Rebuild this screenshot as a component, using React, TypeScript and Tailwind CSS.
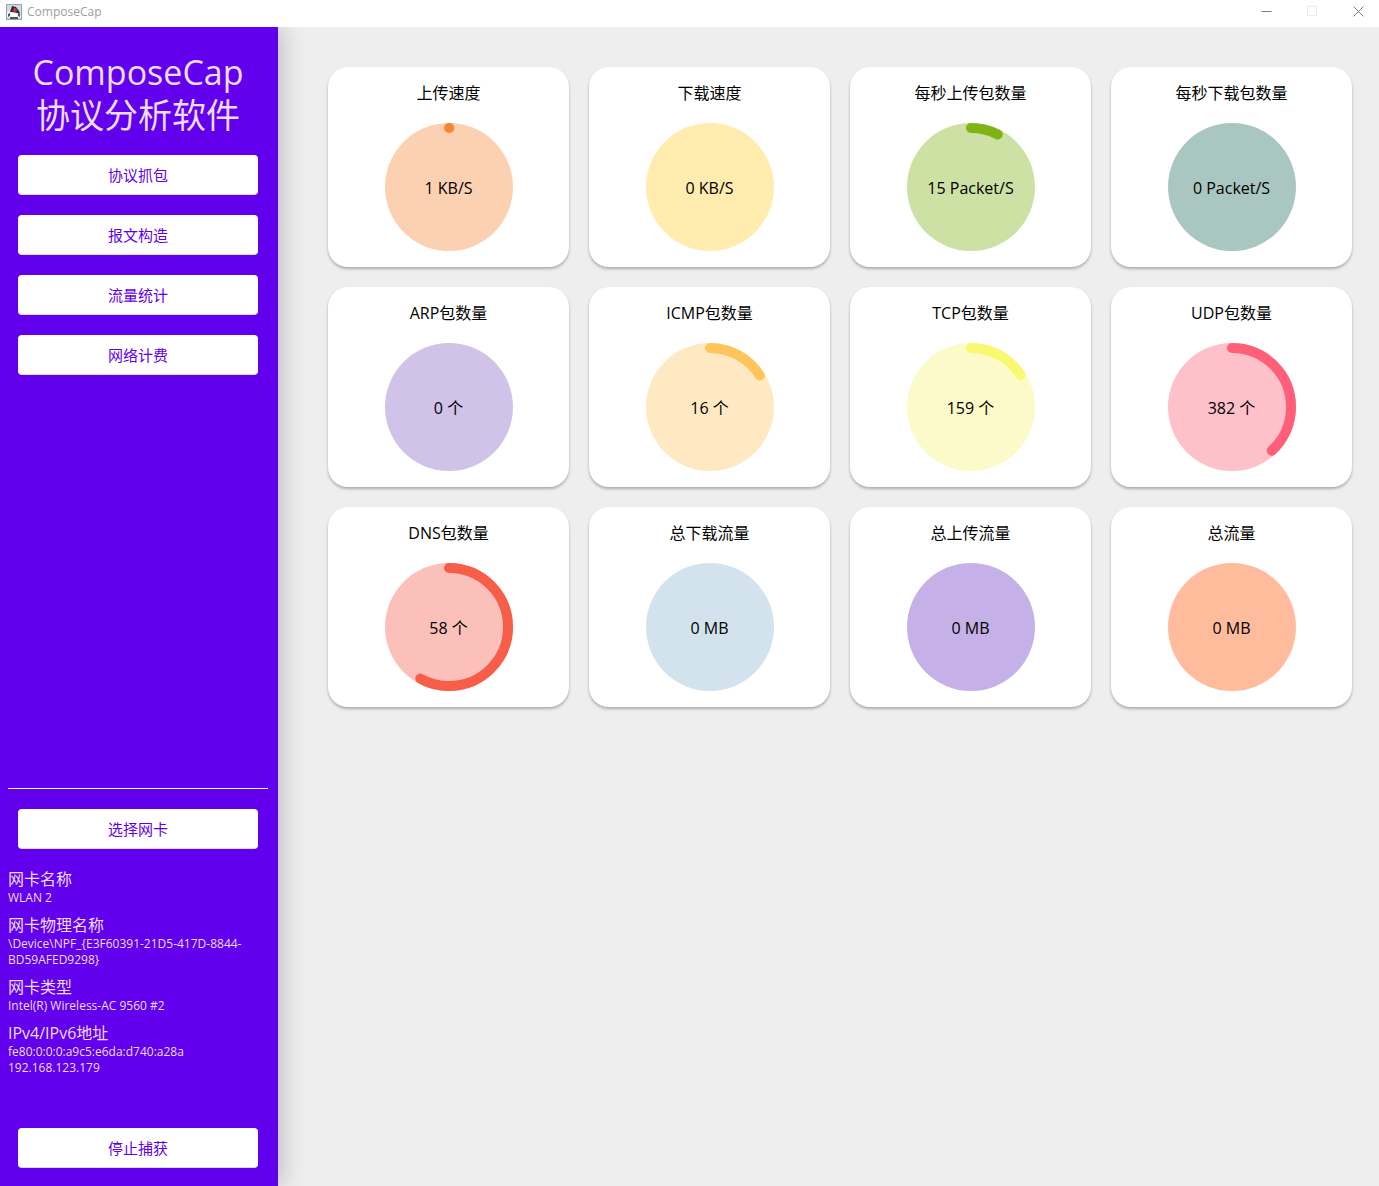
import React from "react";

type Metric = {
  title: string;
  value: string;
  progress: number;
  track: string;
  bar: string;
};

const metrics: Metric[] = [
  { title: "上传速度", value: "1 KB/S", progress: 0.001, track: "#fbd1b1", bar: "#f68735" },
  { title: "下载速度", value: "0 KB/S", progress: 0, track: "#ffecae", bar: "#ffc928" },
  { title: "每秒上传包数量", value: "15 Packet/S", progress: 0.075, track: "#cee1a4", bar: "#80b415" },
  { title: "每秒下载包数量", value: "0 Packet/S", progress: 0, track: "#aac6c1", bar: "#2d7368" },
  { title: "ARP包数量", value: "0 个", progress: 0, track: "#d0c2e8", bar: "#8562c4" },
  { title: "ICMP包数量", value: "16 个", progress: 0.16, track: "#fee9c3", bar: "#ffc55a" },
  { title: "TCP包数量", value: "159 个", progress: 0.159, track: "#fdfac9", bar: "#f9f871" },
  { title: "UDP包数量", value: "382 个", progress: 0.382, track: "#fec0c9", bar: "#ff5f79" },
  { title: "DNS包数量", value: "58 个", progress: 0.58, track: "#fbc0b9", bar: "#f65e49" },
  { title: "总下载流量", value: "0 MB", progress: 0, track: "#d3e3ee", bar: "#8ebad4" },
  { title: "总上传流量", value: "0 MB", progress: 0, track: "#c5b1e7", bar: "#6e3cc4" },
  { title: "总流量", value: "0 MB", progress: 0, track: "#ffbc9d", bar: "#ff6d2a" },
];

const menu = ["协议抓包", "报文构造", "流量统计", "网络计费"];

const adapter = [
  { label: "网卡名称", lines: ["WLAN 2"] },
  { label: "网卡物理名称", lines: ["\\Device\\NPF_{E3F60391-21D5-417D-8844-BD59AFED9298}"] },
  { label: "网卡类型", lines: ["Intel(R) Wireless-AC 9560 #2"] },
  { label: "IPv4/IPv6地址", lines: ["fe80:0:0:0:a9c5:e6da:d740:a28a", "192.168.123.179"] },
];

function AppIcon() {
  return (
    <svg width="16" height="16" viewBox="0 0 16 16" aria-hidden="true">
      <rect width="16" height="16" fill="#8fa5b8" />
      <rect x="1" y="1" width="14" height="14" fill="#cfdae4" />
      <path d="M1 8 L4 7 L6 9 L10 8 L14 9 L15 13 L12 14 L3 14 L1 12 Z" fill="#f7f7f7" />
      <path d="M6 2 L10 3 L13 7 L14 10 L11 9 L7 8 L4 8 L5 5 Z" fill="#2c2c33" />
      <path d="M2 10 L4 9 L4 12 L2 13 Z M12 9 L14 10 L14 13 L12 12 Z M4 13 H12 V15 H4 Z" fill="#55555e" />
      <path d="M6 10 H10 V13 H6 Z" fill="#ffffff" />
      <circle cx="9" cy="6" r="2" fill="#dc2f2a" />
    </svg>
  );
}

function PanelButton({ children }: { children: React.ReactNode }) {
  return (
    <button
      type="button"
      className="mx-[10px] h-10 rounded border border-white border-b-[#dcdcdc] bg-white pb-px text-[15px] leading-5 text-[#6200ee]"
    >
      {children}
    </button>
  );
}

function Gauge({ metric }: { metric: Metric }) {
  const length = 2 * Math.PI * 59;
  return (
    <div className="grid size-32 place-items-center">
      <svg viewBox="0 0 128 128" className="col-start-1 row-start-1 size-32" aria-hidden="true">
        <circle cx="64" cy="64" r="64" fill={metric.track} />
        {metric.progress > 0 && (
          <circle
            cx="64"
            cy="64"
            r="59"
            fill="none"
            stroke={metric.bar}
            strokeWidth="10"
            strokeLinecap="round"
            strokeDasharray={`${length * metric.progress} ${length}`}
            transform="rotate(-90 64 64)"
          />
        )}
      </svg>
      <span className="col-start-1 row-start-1 pt-0.5 text-base leading-6">{metric.value}</span>
    </div>
  );
}

function MetricCard({ metric }: { metric: Metric }) {
  return (
    <article className="flex h-[200px] flex-col items-center justify-between rounded-[20px] bg-white pt-3 pb-4 text-black shadow-[0_2px_3px_rgba(0,0,0,0.28)]">
      <h2 className="text-base leading-7">{metric.title}</h2>
      <Gauge metric={metric} />
    </article>
  );
}

export default function App() {
  return (
    <div className="flex min-h-screen flex-col bg-[#eeeeee] font-['Open_Sans','Noto_Sans_CJK_SC',sans-serif]">
      <header className="relative z-20 flex h-[27px] items-start justify-between bg-white">
        <div className="flex items-center gap-[5px] pt-[3px] pl-1.5">
          <AppIcon />
          <span className="text-xs leading-[18px] text-[#9a9fa6]">ComposeCap</span>
        </div>
        <div className="flex gap-[5px] text-[#7d7d7d]">
          <button type="button" aria-label="最小化" className="grid h-[23px] w-[41px] place-items-center">
            <svg width="11" height="11" viewBox="0 0 11 11" stroke="currentColor"><path d="M.5 5.5H10.5" /></svg>
          </button>
          <button type="button" aria-label="最大化" disabled className="grid h-[23px] w-[41px] place-items-center text-[#ebebeb]">
            <svg width="11" height="11" viewBox="0 0 11 11" fill="none" stroke="currentColor"><path d="M.5 .5H9.5V9.5H.5Z" /></svg>
          </button>
          <button type="button" aria-label="关闭" className="grid h-[23px] w-[41px] place-items-center">
            <svg width="11" height="11" viewBox="0 0 11 11" stroke="currentColor"><path d="M.5 .5L10.5 10.5M10.5 .5L.5 10.5" /></svg>
          </button>
        </div>
      </header>
      <div className="flex flex-1">
        <aside className="z-10 flex w-[278px] shrink-0 flex-col bg-[#6200ee] pt-6 pr-[10px] pb-[18px] pl-2 text-[#ecdcfd] shadow-[2px_0_24px_rgba(0,0,0,0.24)]">
          <h1 className="text-center text-[34px] leading-[43px]">
            ComposeCap
            <br />
            协议分析软件
          </h1>
          <nav className="mt-[18px] flex flex-col gap-5">
            {menu.map((item) => (
              <PanelButton key={item}>{item}</PanelButton>
            ))}
          </nav>
          <section className="mt-auto flex flex-col border-t border-white pt-5">
            <PanelButton>选择网卡</PanelButton>
            <dl className="mt-[19px] mb-[52px] flex flex-col gap-2">
              {adapter.map((item) => (
                <div key={item.label}>
                  <dt className="text-base leading-[22px]">{item.label}</dt>
                  {item.lines.map((line) => (
                    <dd key={line} className="text-xs leading-4 break-words">{line}</dd>
                  ))}
                </div>
              ))}
            </dl>
            <PanelButton>停止捕获</PanelButton>
          </section>
        </aside>
        <main className="grid flex-1 grid-cols-4 content-start gap-5 pt-10 pr-[27px] pb-10 pl-[50px]">
          {metrics.map((metric) => (
            <MetricCard key={metric.title} metric={metric} />
          ))}
        </main>
      </div>
    </div>
  );
}
